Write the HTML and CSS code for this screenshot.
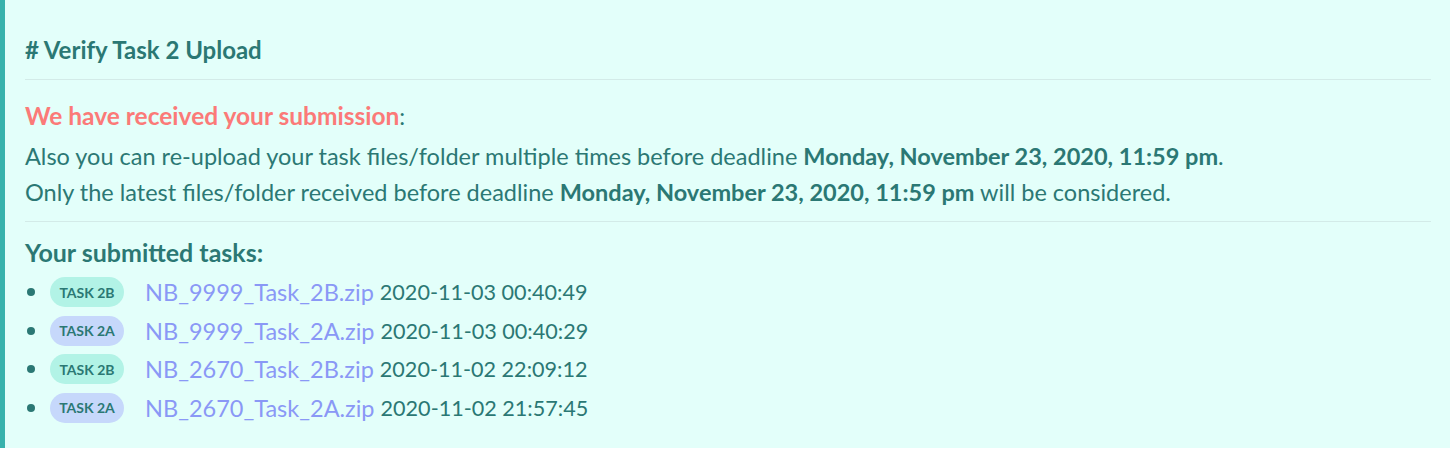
FILE: index.html
```html
<!DOCTYPE html>
<html>
<head>
<meta charset="utf-8">
<link rel="stylesheet" href="styles.css">
</head>
<body>
<section class="panel">
  <h2 class="title"># Verify Task 2 Upload</h2>
  <div class="msg">
    <p class="line received"><span class="ok">We have received your submission</span>:</p>
    <p class="line">Also you can re-upload your task files/folder multiple times before deadline <b>Monday, November 23, 2020, 11:59 pm</b>.</p>
    <p class="line">Only the latest files/folder received before deadline <b>Monday, November 23, 2020, 11:59 pm</b> will be considered.</p>
  </div>
  <div class="tasks">
    <h3 class="tasks-title">Your submitted tasks:</h3>
    <ul class="task-list">
      <li class="task"><span class="badge b2b">TASK 2B</span><a class="file" href="#">NB_9999_Task_2B.zip</a><span class="date">2020-11-03 00:40:49</span></li>
      <li class="task"><span class="badge b2a">TASK 2A</span><a class="file" href="#">NB_9999_Task_2A.zip</a><span class="date">2020-11-03 00:40:29</span></li>
      <li class="task"><span class="badge b2b">TASK 2B</span><a class="file" href="#">NB_2670_Task_2B.zip</a><span class="date">2020-11-02 22:09:12</span></li>
      <li class="task"><span class="badge b2a">TASK 2A</span><a class="file" href="#">NB_2670_Task_2A.zip</a><span class="date">2020-11-02 21:57:45</span></li>
    </ul>
  </div>
</section>
</body>
</html>
```

FILE: styles.css
```css
html, body {
  margin: 0;
  padding: 0;
  background: #ffffff;
}
body {
  font-family: Lato, "Open Sans", sans-serif;
  color: #2b7874;
}
.panel {
  box-sizing: border-box;
  width: 1450px;
  height: 448px;
  background: #e3fffa;
  border-left: 5px solid #38b2ac;
  padding: 28px 19px 0 20px;
}
.title {
  margin: 0;
  font-size: 24px;
  font-weight: 700;
  line-height: 44px;
  padding-bottom: 7px;
  border-bottom: 1px solid #d3ebe8;
}
.msg {
  padding: 18px 0 11px;
  border-bottom: 1px solid #d3ebe8;
}
.line {
  margin: 0;
  font-size: 23.5px;
  line-height: 36px;
}
.received { margin-bottom: 4px; }
.line b { font-weight: 700; }
.ok {
  color: #fb7a78;
  font-weight: 700;
  font-size: 24.5px;
}
.tasks { padding-top: 12px; }
.tasks-title {
  margin: 0 0 3px;
  font-size: 25px;
  font-weight: 700;
  line-height: 36px;
}
.task-list {
  margin: 0;
  padding: 0;
  list-style: none;
}
.task {
  display: flex;
  align-items: center;
  height: 38.5px;
  font-size: 23.5px;
  white-space: nowrap;
}
.task::before {
  content: "";
  width: 8px;
  height: 8px;
  border-radius: 50%;
  background: #2b7874;
  margin: 0 15px 0 2px;
}
.badge {
  box-sizing: border-box;
  width: 74px;
  height: 30px;
  border-radius: 15px;
  display: inline-flex;
  align-items: center;
  justify-content: center;
  font-size: 14px;
  font-weight: 700;
  margin-right: 21px;
}
.b2b { background: #b2f3e6; }
.b2a { background: #c6d8fb; }
.file {
  color: #8a98f6;
  text-decoration: none;
}
.date {
  font-size: 21.6px;
  margin-left: 6px;
}
```
